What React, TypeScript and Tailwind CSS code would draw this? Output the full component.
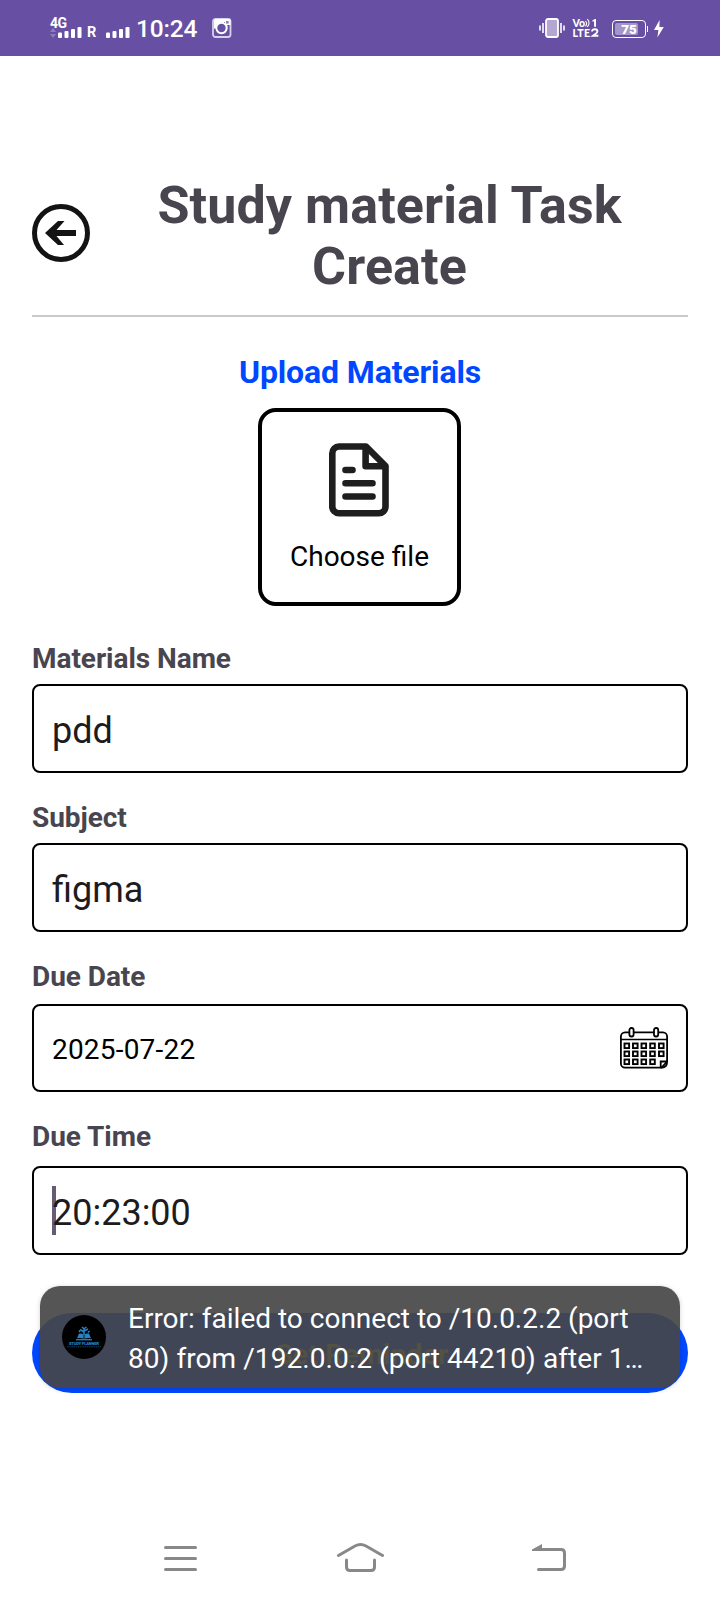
import type { ReactNode } from "react";

function SignalBars({ className = "" }: { className?: string }) {
  return (
    <svg className={className} width="24" height="12" viewBox="0 0 24 12" fill="#fff">
      <rect x="0" y="5.5" width="4" height="5.5" rx="1" />
      <rect x="6.5" y="4" width="4" height="7" rx="1" />
      <rect x="13" y="2" width="4" height="9" rx="1" />
      <rect x="19.5" y="0" width="4" height="11" rx="1" />
    </svg>
  );
}

function StatusBar() {
  return (
    <header className="flex h-14 shrink-0 bg-[#6750a3] pl-[49px] text-white">
      <div className="relative w-[38px]">
        <span className="absolute left-px top-[15px] text-[14px] font-bold leading-4 tracking-[-0.5px]">4G</span>
        <svg className="absolute left-px top-7" width="6" height="10" viewBox="0 0 6 10" fill="#8f7cbf">
          <path d="M3 0 6 4H0ZM3 10 0 6h6Z" />
        </svg>
        <SignalBars className="absolute left-[9px] top-[27px]" />
      </div>
      <span className="mt-[25px] w-[19px] text-[14.5px] font-bold leading-4">R</span>
      <SignalBars className="mt-[27px]" />
      <span className="ml-[6px] mt-[15px] w-[76px] text-[24.5px] font-medium leading-7 tracking-[-0.2px]">10:24</span>
      <svg className="mt-[18px]" width="20" height="20" viewBox="0 0 20 20" fill="none">
        <rect x="1" y="1" width="17.5" height="18" rx="2.5" stroke="#d9d0ec" strokeWidth="1.8" />
        <path d="M3 1h14a1.5 1.5 0 0 1 1.5 1.5V7H14V3L2 11V2.5Z" fill="#fff" />
        <circle cx="9.5" cy="10" r="5.2" fill="#6750a3" stroke="#fff" strokeWidth="2" />
        <rect x="13.5" y="2.5" width="3.6" height="3.6" fill="#8f7cbf" stroke="#fff" />
      </svg>
      <svg className="ml-[307px] mt-[18px]" width="26" height="20" viewBox="0 0 26 20" fill="none">
        <rect x="7" y="1" width="12" height="18" rx="2" fill="#b3a7d2" stroke="#fff" strokeWidth="1.8" />
        <path d="M4 5v10M22 5v10M1 7.5v5M25 7.5v5" stroke="#fff" strokeWidth="1.6" />
      </svg>
      <svg className="ml-[7px] mt-[14px]" width="30" height="28" viewBox="0 -4 30 28" fill="#fff" fontFamily="Lato, sans-serif" fontWeight="900">
        <text x="0.5" y="8.8" fontSize="10.5" textLength="12.5">Vo</text>
        <path d="M13.5 3q2.200 2.500 0 5.300M15.300 1q3.500 4 0 8" fill="none" stroke="#fff" strokeWidth="1.1" />
        <path d="M20.500 2.300 23 1h1v7.800h-1.900V3.200l-1.600.6Z" />
        <text x="0.5" y="18.800" fontSize="10.5" textLength="17.5">LTE</text>
        <path d="M20 13.500q.3-2.300 2.900-2.300 2.500 0 2.500 2.100 0 1.300-2 2.700l-2.400 1.800h5.400" fill="none" stroke="#fff" strokeWidth="1.9" />
      </svg>
      <div className="relative ml-2.5 mt-5 h-[18px] w-[34px] rounded-[4px] border-[1.5px] border-white p-0.5">
        <div className="h-full w-[23px] rounded-[2px] bg-[#a496ca]" />
        <span className="absolute inset-0 text-center text-[13.5px] font-black leading-4">75</span>
        <span className="absolute -right-[3px] top-[5px] h-[6px] w-[1.5px] bg-white" />
      </div>
      <svg className="ml-[8px] mt-5" width="10" height="18" viewBox="0 0 10 18" fill="#fff">
        <path d="M5.600 0 0 10h4.400L3.400 17.500 9.800 7H5.400Z" />
      </svg>
    </header>
  );
}

function BackIcon() {
  return (
    <svg width="58" height="58" viewBox="0 0 58 58">
      <circle cx="29" cy="29" r="26.5" fill="none" stroke="#131313" strokeWidth="5" />
      <path d="M13 29 26 17h6.500L24.500 26H44v6H24.500l7.500 9H26Z" fill="#131313" />
    </svg>
  );
}

function FileIcon() {
  return (
    <svg className="mr-0.5" width="60" height="74" viewBox="0 0 60 74" fill="none" stroke="#1e1e1e" strokeWidth="6.6" strokeLinecap="round" strokeLinejoin="round">
      <path d="M10 3.5h27L56.500 23v40.500a6.800 6.800 0 0 1-6.800 6.800H10a6.700 6.700 0 0 1-6.700-6.800V10.200A6.700 6.700 0 0 1 10 3.500ZM36.600 4v19.300H56" />
      <path d="M16.500 27h7M16.500 40.300h27M16.500 53.500h27" />
    </svg>
  );
}

const calendarDays = [
  [4.5, 16.5], [13, 16.5], [21.5, 16.5], [30.2, 16.5], [39, 16.5],
  [4.5, 24.5], [13, 24.5], [21.5, 24.5], [30.2, 24.5], [39, 24.5],
  [4.5, 32.5], [13, 32.5], [21.5, 32.5], [30.2, 32.5],
];

function CalendarIcon() {
  return (
    <svg width="48" height="42" viewBox="0 0 48 42" fill="none" stroke="#000" strokeWidth="1.8">
      <path d="M9 5.300H5A4.200 4.200 0 0 0 .9 9.500v27A4.200 4.200 0 0 0 5 40.700h36.500l5.600-6V9.500A4.200 4.200 0 0 0 43 5.300h-4M14 5.300h20" />
      <path d="M1 12.500h46" strokeWidth="1.4" />
      <path d="M40.700 40.700v-6.200h6.200q.8 6-6.200 6.200" />
      <rect x="9.4" y="1" width="4.2" height="8.5" rx="2" />
      <rect x="34" y="1" width="4.2" height="8.5" rx="2" />
      {calendarDays.map(([x, y]) => (
        <rect key={`${x}-${y}`} x={x} y={y} width="4.6" height="4.6" strokeWidth="1.9" />
      ))}
    </svg>
  );
}

function Field({ label, className, children }: { label: string; className: string; children: ReactNode }) {
  return (
    <div className={className}>
      <div className="h-[33px] text-[28px] font-bold leading-[33px] tracking-[-0.05px] text-[#49454f]">{label}</div>
      {children}
    </div>
  );
}

const box = "flex items-center rounded-[8px] border-2 border-black pl-[18px] pr-[18px]";

function PlannerLogo() {
  return (
    <svg width="44" height="44" viewBox="0 0 44 44" fill="#2583c5">
      <circle cx="22" cy="22" r="22" fill="#000" />
      <path d="M17 18.500q3-.5 4.600 1.200v4q-3-1.300-6.600-.5ZM27 18.500q-3-.5-4.600 1.200v4q3-1.300 6.600-.5Z" />
      <path d="M22 20v-7M22 17l-4-2.500M22 16l4-2M20 12l2 1.800 2.500-1.800M18 17l-1-1.500M26 17.500l1.500-1.500" stroke="#2583c5" strokeWidth="1.5" fill="none" />
      <path d="M14 24.700h16" stroke="#2583c5" strokeWidth="1.3" />
      <text x="7" y="30" fontSize="4.2" fontWeight="900" textLength="30">STUDY PLANNER</text>
      <path d="M5 31.800h34" stroke="#175482" strokeWidth=".8" strokeDasharray="1.5 .7" />
    </svg>
  );
}

export default function App() {
  return (
    <div className="flex h-[1600px] w-[720px] flex-col overflow-hidden bg-white font-['Roboto',sans-serif]">
      <StatusBar />
      <main className="flex h-[1464px] shrink-0 flex-col px-8 pt-[119px]">
        <div className="flex h-[140px]">
          <button className="mt-[29px] h-[58px] w-[58px] shrink-0">
            <BackIcon />
          </button>
          <h1 className="flex-1 pl-px text-center text-[52px] font-bold leading-[61px] tracking-[0.1px] text-[#49454f]">
            Study material Task
            <br />
            Create
          </h1>
        </div>
        <div className="h-0.5 shrink-0 bg-[#cacaca]" />
        <h2 className="mt-9 text-center text-[32px] font-bold leading-[38px] tracking-[-0.13px] text-[#0048ff]">Upload Materials</h2>
        <button className="mr-[1px] mt-[17px] flex h-[198px] w-[203px] shrink-0 flex-col items-center self-center rounded-[18px] border-4 border-black pt-[31px]">
          <FileIcon />
          <span className="mt-[23px] text-[28px] leading-[33px]">Choose file</span>
        </button>
        <Field label="Materials Name" className="mt-9">
          <div className={`${box} mt-[9px] h-[89px] text-[36px] leading-[42px] text-[#1d1b20]`}>
            <span className="mt-1">pdd</span>
          </div>
        </Field>
        <Field label="Subject" className="mt-7">
          <div className={`${box} mt-[9px] h-[89px] text-[36px] leading-[42px] text-[#1d1b20]`}>
            <span className="mt-1">figma</span>
          </div>
        </Field>
        <Field label="Due Date" className="mt-7">
          <div className={`${box} mt-[11px] h-[88px] justify-between text-[28px] leading-[33px] text-black`}>
            <span className="mt-0.5 tracking-[0.2px]">2025-07-22</span>
            <CalendarIcon />
          </div>
        </Field>
        <Field label="Due Time" className="mt-7">
          <div className={`${box} relative mt-[13px] h-[89px] text-[36px] leading-[42px] text-[#1d1b20]`}>
            <span className="absolute left-[18px] top-[18px] h-[49px] w-1 bg-[#655b75]" />
            <span className="relative mt-1">20:23:00</span>
          </div>
        </Field>
        <div className="relative mt-[58px] h-20 shrink-0">
          <button className="h-20 w-full rounded-full bg-[#0048ff] pl-1 pt-1 text-[28px] font-bold tracking-[0.2px] text-[#e0bf30]">
            Set Reminder
          </button>
          <div className="absolute -top-[27px] left-2 flex h-[102px] w-[640px] items-center rounded-[20px] bg-[rgba(70,70,70,0.918)] pl-[22px] shadow-[0_1px_5px_rgba(0,0,0,0.18)]">
            <PlannerLogo />
            <p className="ml-[22px] mt-[3px] whitespace-nowrap text-[28px] leading-10 text-white">
              Error: failed to connect to /10.0.2.2 (port
              <br />
              <span className="tracking-[0.07px]">80) from /192.0.0.2 (port 44210) after 1…</span>
            </p>
          </div>
        </div>
      </main>
      <nav className="flex h-20 shrink-0 pl-[164px] pt-[22px]">
        <svg width="33" height="30" viewBox="0 0 33 30" stroke="#888" strokeWidth="3" strokeLinecap="round">
          <path d="M1.500 5.500h30M1.500 16.500h30M1.500 27.500h30" />
        </svg>
        <svg className="ml-[140px]" width="47" height="31" viewBox="0 0 47 31" fill="none" stroke="#888" strokeWidth="3" strokeLinecap="round">
          <path d="M1.500 13.500 18 4q5.500-3 11 0l16.500 9.500M9.500 18v7q0 3.500 3.500 3.500h21q3.500 0 3.500-3.500v-7" />
        </svg>
        <svg className="ml-[148px]" width="35" height="31" viewBox="0 0 35 31" fill="none" stroke="#888" strokeWidth="3" strokeLinecap="round">
          <path d="M8 7.500h21q3.500 0 3.500 3.500v13q0 3.500-3.500 3.500H6.500" />
          <path d="M10 2v7H0V7.500Z" fill="#888" stroke="none" />
        </svg>
      </nav>
    </div>
  );
}
